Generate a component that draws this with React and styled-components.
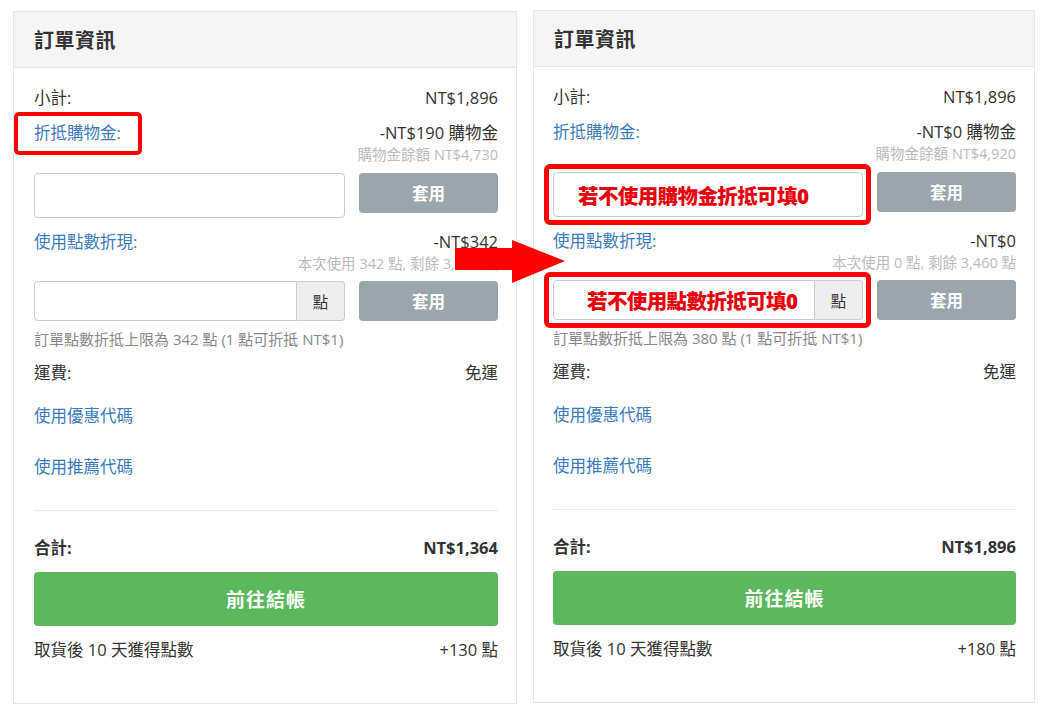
import React from 'react'
import styled, { createGlobalStyle, css } from 'styled-components'

const GlobalStyle = createGlobalStyle`
  html, body {
    margin: 0;
    padding: 0;
    background: #fff;
  }
  body {
    font-family: 'Open Sans', 'Noto Sans CJK TC', sans-serif;
    color: #333;
    font-size: 16.5px;
  }
`

const Page = styled.div`
  position: relative;
  display: grid;
  grid-template-columns: 504px 502px;
  column-gap: 16px;
  align-items: start;
  padding: 11px 0 0 13px;
  width: 1040px;
  height: 719px;
  box-sizing: border-box;
`

const Panel = styled.section`
  border: 1px solid #e6e6e6;
  background: #fff;
  margin-top: ${props => (props.$lift ? '-1px' : '0')};
`

const PanelHeader = styled.header`
  height: 55px;
  display: flex;
  align-items: center;
  padding: 0 20px;
  background: #f5f5f5;
  border-bottom: 1px solid #e6e6e6;
`

const PanelTitle = styled.h3`
  margin: 0;
  font-size: 20px;
  font-weight: 600;
  color: #333;
  letter-spacing: 0.5px;
`

const PanelBody = styled.div`
  display: flex;
  flex-direction: column;
  padding: 19px 18px 42px ${props => (props.$tight ? 19 : 20)}px;
`

const Row = styled.div`
  display: flex;
  justify-content: space-between;
  align-items: flex-start;
  line-height: 22px;
  margin-top: ${props => props.$gap || 0}px;
  font-weight: ${props => (props.$bold ? 700 : 400)};
`

const Label = styled.span`
  position: relative;
  color: ${props => (props.$link ? '#3a7bbd' : '#333')};

  ${props =>
    props.$marked &&
    css`
      &::after {
        content: '';
        position: absolute;
        left: -20px;
        right: -21px;
        top: -10px;
        bottom: -11px;
        border: 4px solid #f00;
        border-radius: 5px;
      }
    `}
`

const Value = styled.div`
  display: flex;
  flex-direction: column;
  align-items: flex-end;
`

const SubNote = styled.span`
  font-size: 14.5px;
  line-height: 22px;
  color: #bbb;
`

const Helper = styled.div`
  margin-top: 7px;
  font-size: 15px;
  line-height: 22px;
  color: #888;
`

const LinkText = styled.a`
  display: block;
  color: #3a7bbd;
  line-height: 22px;
  text-decoration: none;
  margin-top: ${props => props.$gap}px;
`

const FormRow = styled.div`
  display: grid;
  grid-template-columns: 1fr 139px;
  column-gap: 14px;
  align-items: start;
  margin-top: ${props => props.$gap}px;
`

const FieldWrap = styled.div`
  position: relative;
  display: flex;

  ${props =>
    props.$marked &&
    css`
      &::after {
        content: '';
        position: absolute;
        left: -9px;
        right: -8px;
        top: -8px;
        bottom: -8px;
        border: 5px solid #f00;
        border-radius: 6px;
        pointer-events: none;
      }
    `}
`

const Field = styled.div`
  flex: 1;
  height: ${props => props.$h}px;
  box-sizing: border-box;
  border: 1px solid #ccc;
  border-radius: ${props => (props.$grouped ? '4px 0 0 4px' : '4px')};
  background: #fff;
  display: flex;
  align-items: center;
  padding-left: ${props => props.$indent || 0}px;
`

const Addon = styled.span`
  width: 48px;
  height: 40px;
  box-sizing: border-box;
  border: 1px solid #ccc;
  border-left: 0;
  border-radius: 0 4px 4px 0;
  background: #eee;
  display: flex;
  align-items: center;
  justify-content: center;
  font-size: 15.5px;
  color: #333;
`

const Note = styled.span`
  color: #e8000a;
  font-size: 20.5px;
  font-weight: 900;
  letter-spacing: -0.6px;
`

const ApplyButton = styled.button`
  height: 40px;
  border: 0;
  border-radius: 4px;
  background: #9aa6ab;
  color: #fff;
  font-family: inherit;
  font-size: 16.5px;
  font-weight: 600;
`

const Divider = styled.hr`
  width: 100%;
  margin: 32px 0 0;
  border: 0;
  border-top: 1px solid #e9e9e9;
`

const CheckoutButton = styled.button`
  height: 54px;
  margin-top: 13px;
  border: 0;
  border-radius: 4px;
  background: #5cb85c;
  color: #fff;
  font-family: inherit;
  font-size: 19px;
  font-weight: 700;
  letter-spacing: 1px;
`

const Arrow = styled.svg`
  position: absolute;
  left: 454px;
  top: 239px;
`

const OrderPanel = ({ data, lift, annotate }) => (
  <Panel $lift={lift}>
    <PanelHeader>
      <PanelTitle>訂單資訊</PanelTitle>
    </PanelHeader>
    <PanelBody $tight={lift}>
      <Row>
        <span>小計:</span>
        <span>{data.subtotal}</span>
      </Row>
      <Row $gap={13}>
        <Label $link $marked={!annotate}>折抵購物金:</Label>
        <Value>
          <span>{data.credit}</span>
          <SubNote>{data.creditLeft}</SubNote>
        </Value>
      </Row>
      <FormRow $gap={7}>
        <FieldWrap $marked={annotate}>
          <Field $h={45} $indent={24}>{annotate && <Note>若不使用購物金折抵可填0</Note>}</Field>
        </FieldWrap>
        <ApplyButton>套用</ApplyButton>
      </FormRow>
      <Row $gap={13}>
        <Label $link>使用點數折現:</Label>
        <Value>
          <span>{data.points}</span>
          <SubNote>{data.pointsLeft}</SubNote>
        </Value>
      </Row>
      <FormRow $gap={6}>
        <FieldWrap $marked={annotate}>
          <Field $h={40} $grouped $indent={33}>
            {annotate && <Note>若不使用點數折抵可填0</Note>}
          </Field>
          <Addon>點</Addon>
        </FieldWrap>
        <ApplyButton>套用</ApplyButton>
      </FormRow>
      <Helper>{data.limit}</Helper>
      <Row $gap={12}>
        <span>運費:</span>
        <span>免運</span>
      </Row>
      <LinkText $gap={21}>使用優惠代碼</LinkText>
      <LinkText $gap={29}>使用推薦代碼</LinkText>
      <Divider />
      <Row $gap={26} $bold>
        <span>合計:</span>
        <span>{data.total}</span>
      </Row>
      <CheckoutButton>前往結帳</CheckoutButton>
      <Row $gap={13}>
        <span>取貨後 10 天獲得點數</span>
        <span>{data.reward}</span>
      </Row>
    </PanelBody>
  </Panel>
)

const before = {
  subtotal: 'NT$1,896',
  credit: '-NT$190 購物金',
  creditLeft: '購物金餘額 NT$4,730',
  points: '-NT$342',
  pointsLeft: '本次使用 342 點, 剩餘 3,118 點',
  limit: '訂單點數折抵上限為 342 點 (1 點可折抵 NT$1)',
  total: 'NT$1,364',
  reward: '+130 點'
}

const after = {
  subtotal: 'NT$1,896',
  credit: '-NT$0 購物金',
  creditLeft: '購物金餘額 NT$4,920',
  points: '-NT$0',
  pointsLeft: '本次使用 0 點, 剩餘 3,460 點',
  limit: '訂單點數折抵上限為 380 點 (1 點可折抵 NT$1)',
  total: 'NT$1,896',
  reward: '+180 點'
}

export default function App() {
  return (
    <>
      <GlobalStyle />
      <Page>
        <OrderPanel data={before} />
        <OrderPanel data={after} lift annotate />
        <Arrow width="112" height="46" viewBox="0 0 112 46">
          <rect x="1" y="9" width="60" height="22" fill="#f00" />
          <polygon points="58,1 111,22 58,44" fill="#f00" />
        </Arrow>
      </Page>
    </>
  )
}
